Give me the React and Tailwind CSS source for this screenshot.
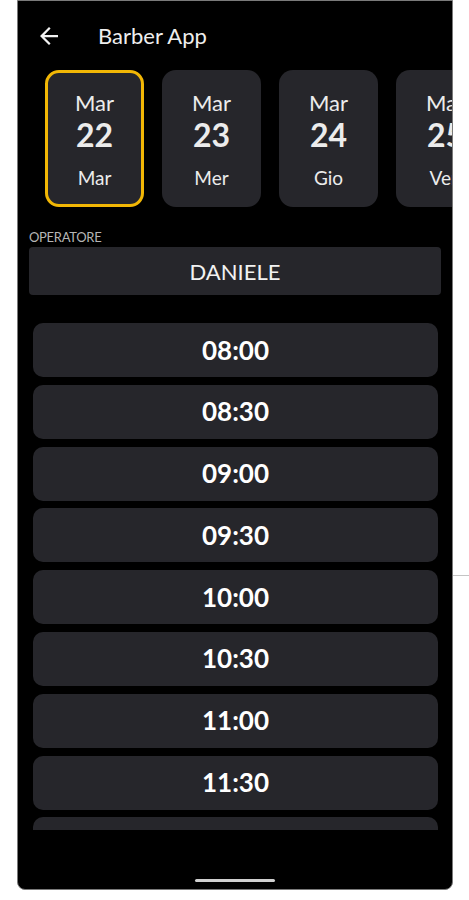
import React from 'react';

const days = [
  { month: 'Mar', day: '22', name: 'Mar', selected: true },
  { month: 'Mar', day: '23', name: 'Mer' },
  { month: 'Mar', day: '24', name: 'Gio' },
  { month: 'Mar', day: '25', name: 'Ven' },
];

const slots = ['08:00', '08:30', '09:00', '09:30', '10:00', '10:30', '11:00', '11:30', '12:00'];

const DayCard = ({ month, day, name, selected }) => (
  <div
    className={`shrink-0 w-[99px] h-[137px] rounded-[14px] bg-[#26262b] flex flex-col items-center text-[#ececec] ${
      selected ? 'border-[3px] border-[#f2b705] pt-[17px]' : 'pt-[20px]'
    }`}
  >
    <span className="text-[22px] leading-[26px]">{month}</span>
    <span className="text-[32px] leading-[38px] font-bold">{day}</span>
    <span className="text-[19px] leading-[24px] mt-[12px]">{name}</span>
  </div>
);

const App = () => {
  return (
    <div className="font-['Lato','Liberation_Sans',sans-serif] bg-white w-[469px] h-[900px] flex overflow-hidden">
      <div className="ml-[17px] w-[436px] h-[890px] bg-black border border-[#7a7a7a] rounded-b-[8px] flex flex-col overflow-hidden">
        {/* header */}
        <div className="h-[69px] flex items-center">
          <svg
            width="18"
            height="18"
            viewBox="4 4 16 16"
            className="ml-[22px] fill-[#f2f2f2]"
          >
            <path d="M20 11H7.83l5.59-5.59L12 4l-8 8 8 8 1.41-1.41L7.83 13H20v-2z" />
          </svg>
          <span className="ml-[40px] text-[22px] text-[#eeeeee]">Barber App</span>
        </div>

        {/* days */}
        <div className="flex gap-[18px] pl-[27px] overflow-hidden">
          {days.map((d) => (
            <DayCard key={d.day} {...d} />
          ))}
        </div>

        <div className="mt-[23px] ml-[11px] text-[13px] leading-[14px] tracking-[-0.3px] text-[#b5b5b5]">
          OPERATORE
        </div>
        <div className="mt-[3px] mx-[11px] h-[48px] rounded-[4px] bg-[#26262b] flex items-center justify-center text-[22px] text-[#f2f2f2]">
          DANIELE
        </div>

        {/* slots */}
        <div className="mt-[28px] ml-[15px] mr-[14px] h-[507px] overflow-hidden flex flex-col gap-[7.8px]">
          {slots.map((s) => (
            <div
              key={s}
              className="shrink-0 h-[54px] rounded-[10px] bg-[#26262b] flex items-center justify-center text-[26px] font-bold text-white"
            >
              {s}
            </div>
          ))}
        </div>

        <div className="flex-1 flex justify-center">
          <div className="mt-[49px] w-[80px] h-[3px] rounded-full bg-[#d0d0d0]" />
        </div>
      </div>
      <div className="flex-1">
        <div className="mt-[575px] h-px bg-[#c4c4c4]" />
      </div>
    </div>
  );
};

export default App;
